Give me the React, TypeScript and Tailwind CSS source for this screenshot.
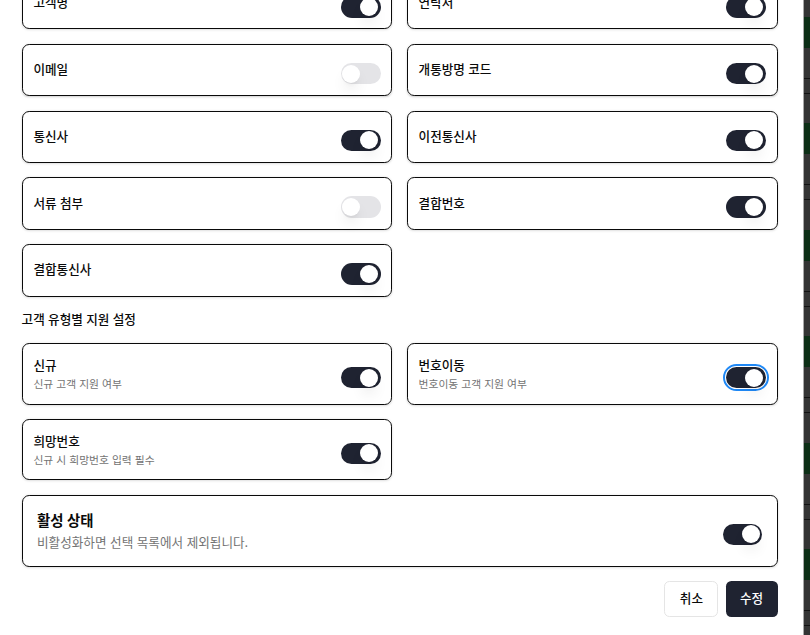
import React from "react";
import clsx from "clsx";

function Switch({ on, focus }: { on: boolean; focus?: boolean }) {
  return (
    <span
      className={clsx(
        "mt-2 inline-flex h-6 w-11 shrink-0 items-center rounded-full border-2 border-transparent",
        on ? "bg-[#1f2331]" : "bg-[#e4e4e7]",
        focus && "outline-[2.6px] outline-offset-[1.8px] outline-[#1f88f5]"
      )}
    >
      <span
        className={clsx(
          "block h-5 w-5 rounded-full bg-white shadow-lg",
          on ? "translate-x-5" : "translate-x-0"
        )}
      />
    </span>
  );
}

function SimpleCard({ label, on }: { label: string; on: boolean }) {
  return (
    <div className="flex items-center justify-between rounded-lg border border-[#0a0a0a] p-3 shadow-sm">
      <span className="text-sm font-medium text-[#0a0a0a]">{label}</span>
      <Switch on={on} />
    </div>
  );
}

function DescCard({
  label,
  desc,
  on,
  focus,
}: {
  label: string;
  desc: string;
  on: boolean;
  focus?: boolean;
}) {
  return (
    <div className="flex items-center justify-between rounded-lg border border-[#0a0a0a] p-3 shadow-sm">
      <div>
        <div className="text-sm font-medium leading-6 text-[#0a0a0a]">{label}</div>
        <div className="mt-0.5 text-xs text-[#737373]">{desc}</div>
      </div>
      <Switch on={on} focus={focus} />
    </div>
  );
}

const simple: { label: string; on: boolean }[] = [
  { label: "고객명", on: true },
  { label: "연락처", on: true },
  { label: "이메일", on: false },
  { label: "개통방명 코드", on: true },
  { label: "통신사", on: true },
  { label: "이전통신사", on: true },
  { label: "서류 첨부", on: false },
  { label: "결합번호", on: true },
  { label: "결합통신사", on: true },
];

const stripSegments: { h: number; c: string }[] = [{ h: 17, c: "#343434" }];
for (let i = 0; i < 6; i++) {
  stripSegments.push({ h: 31, c: "#0c2e16" });
  stripSegments.push({ h: 30, c: "#343434" });
  stripSegments.push({ h: 1, c: "#111111" });
  stripSegments.push({ h: 14, c: "#343434" });
  stripSegments.push({ h: 1, c: "#111111" });
  stripSegments.push({ h: i % 2 === 0 ? 29 : 30, c: "#343434" });
}

export default function App() {
  return (
    <div className="flex h-[635px] w-[810px] overflow-hidden bg-white font-['Inter','Noto_Sans_CJK_KR',sans-serif] text-[#0a0a0a]">
      <div className="h-full w-[803px] shrink-0 overflow-hidden bg-white">
        <div className="[zoom:0.9]">
          <div className="ml-6 mt-[-25.5px] w-[840px] space-y-4">
            <div className="grid grid-cols-2 gap-4">
              {simple.map((s) => (
                <SimpleCard key={s.label} label={s.label} on={s.on} />
              ))}
            </div>
            <h3 className="text-sm font-medium">고객 유형별 지원 설정</h3>
            <div className="grid grid-cols-2 gap-4">
              <DescCard label="신규" desc="신규 고객 지원 여부" on />
              <DescCard label="번호이동" desc="번호이동 고객 지원 여부" on focus />
              <DescCard label="희망번호" desc="신규 시 희망번호 입력 필수" on />
            </div>
            <div className="flex items-center justify-between rounded-lg border border-[#0a0a0a] p-4 shadow-sm">
              <div>
                <div className="text-base font-semibold">활성 상태</div>
                <div className="mt-0.5 text-sm text-[#737373]">
                  비활성화하면 선택 목록에서 제외됩니다.
                </div>
              </div>
              <Switch on />
            </div>
            <div className="flex justify-end gap-2">
              <button className="h-10 rounded-md border border-[#e5e5e5] bg-white px-4 text-sm font-medium">
                취소
              </button>
              <button className="h-10 rounded-md bg-[#1f2331] px-4 text-sm font-medium text-white">
                수정
              </button>
            </div>
          </div>
        </div>
      </div>
      <div className="h-full w-px shrink-0 bg-[#a8a8a8]" />
      <div className="flex h-full flex-1 flex-col bg-[#343434]">
        {stripSegments.map((s, i) => (
          <div key={i} className="w-full shrink-0" style={{ height: s.h, backgroundColor: s.c }} />
        ))}
      </div>
    </div>
  );
}
